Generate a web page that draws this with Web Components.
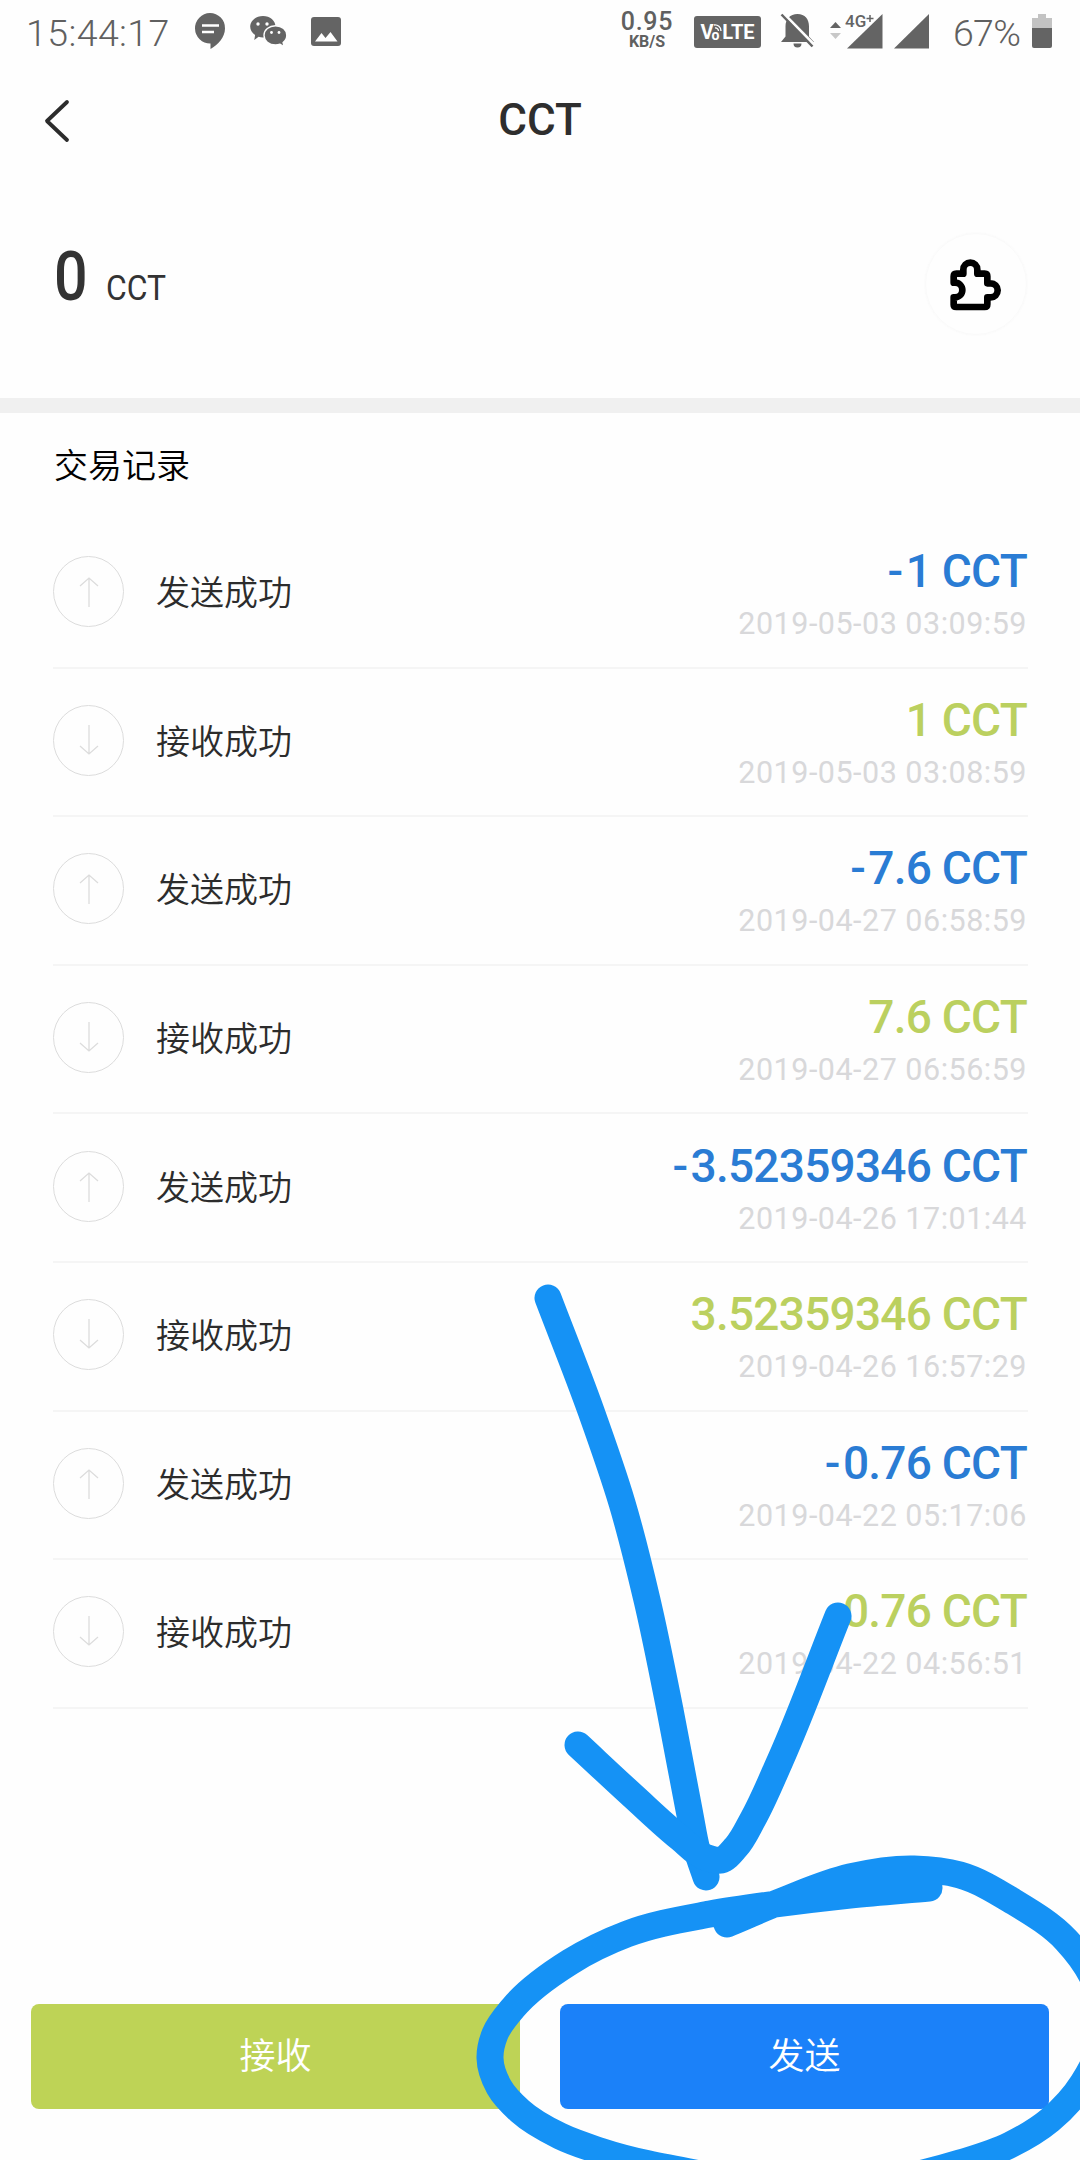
<!DOCTYPE html>
<html lang="zh-CN">
<head>
<meta charset="utf-8">
<title>CCT</title>
<style>
    html, body {
        margin: 0;
        padding: 0;
        background: #fefefe;
    }
    body {
        width: 1080px;
        height: 2160px;
        overflow: hidden;
        font-family: Roboto, "Noto Sans CJK SC", sans-serif;
    }
</style>
</head>
<body>
<wallet-page></wallet-page>

<script>
(function(){
    function attach(el, html) {
        const template = document.createElement('template');
        template.innerHTML = html;
        const root = el.attachShadow({mode: 'open'});
        root.appendChild(template.content.cloneNode(true));
        return root;
    }

    class StatusBar extends HTMLElement {
        constructor() {
            super();
            attach(this, `
                <style>
                    :host {
                        display: flex;
                        align-items: flex-start;
                        box-sizing: border-box;
                        height: 64px;
                        padding: 0 28px 0 26px;
                        color: #606060;
                        fill: #646464;
                        white-space: nowrap;
                    }
                    svg { display: block; flex: none; overflow: visible; }
                    .time, .percent {
                        font-size: 37.5px;
                        font-weight: 350;
                        line-height: 44px;
                        margin-top: 11px;
                    }
                    .time { width: 167px; letter-spacing: 0.4px; }
                    .percent { width: 79px; margin-left: 23px; letter-spacing: -0.7px; }
                    .chat { margin: 13px 25px 0 2px; }
                    .wechat { margin: 16px 24px 0 0; }
                    .image { margin-top: 17px; }
                    .speed {
                        width: 56px;
                        margin: 8px 19px 0 auto;
                        text-align: center;
                        font-weight: 500;
                    }
                    .speed b { display: block; font-weight: 500; font-size: 25px; line-height: 27px; letter-spacing: 0.7px; }
                    .speed i { display: block; font-style: normal; font-weight: 700; font-size: 16px; line-height: 14px; }
                    .volte {
                        display: flex;
                        align-items: center;
                        justify-content: center;
                        width: 67px;
                        height: 32px;
                        margin: 16px 19px 0 0;
                        border-radius: 3px;
                        background: #646464;
                        color: #fff;
                        font-weight: 700;
                        font-size: 20px;
                    }
                    .volte small { font-size: 14px; margin: 5px 1px 0 -2px; }
                    .volte svg { margin: -9px 0 0 -6px; }
                    .bell { margin: 13px 15px 0 0; }
                    .net { margin: 14px 11px 0 0; }
                    .net text { font-size: 17px; font-weight: 500; }
                    .signal { margin-top: 14px; }
                    .battery { margin-top: 14px; }
                </style>
                <span class="time">15:44:17</span>
                <svg class="chat" width="30" height="36" viewBox="0 0 30 36">
                    <path d="M15 0a15 15 0 0 1 15 15.500C30 24 23 32 15.500 36V30.500A15 15 0 0 1 15 0z"/>
                    <path d="M7 12.500H24M7 19H19" stroke="#fff" stroke-width="2.500"/>
                </svg>
                <svg class="wechat" width="37" height="32" viewBox="0 0 37 32">
                    <path d="M13 0C20 0 25.500 4.500 25.500 11S20 21.500 13 21.500c-1.600 0-3-.2-4.400-.7L4.300 24l.8-5C2 17 .2 14 .2 10.800.2 4.500 6 0 13 0z"/>
                    <path d="M25.500 9.800c6.600 0 11.300 4.200 11.300 9.500 0 3-1.500 5.500-3.700 7.300l1 4.200-4-2.600c-1.300.5-2.900.8-4.600.8-6.500 0-11.500-4.300-11.500-9.700s5-9.500 11.500-9.500z" stroke="#fefefe" stroke-width="1.400"/>
                    <g fill="#fff"><circle cx="8" cy="8" r="1.700"/><circle cx="17" cy="8" r="1.700"/><circle cx="21.500" cy="16.500" r="1.400"/><circle cx="29" cy="16.500" r="1.400"/></g>
                </svg>
                <svg class="image" width="30" height="29" viewBox="0 0 30 29">
                    <rect width="30" height="29" rx="3"/>
                    <path d="M4 24.500 10.500 16l4 5L19.500 15l7 9.500z" fill="#fff"/>
                </svg>
                <div class="speed"><b>0.95</b><i>KB/S</i></div>
                <div class="volte">V<small>o</small><svg width="8" height="8" viewBox="0 0 8 8" fill="none" stroke="#fff" stroke-width="1.300"><path d="M0 1a6 6 0 0 1 7 6M1 4a3 3 0 0 1 3.500 3"/></svg>LTE</div>
                <svg class="bell" width="35" height="35" viewBox="0 0 35 35">
                    <path d="M17.500 1C25 1 29 6 29 13.500V23.500L34 29H1L5.500 23.500V13.500C5.500 6 10 1 17.500 1zM13.500 30.500h8a4 4 0 0 1-8 0z"/>
                    <path d="M3 0 34 31.500" stroke="#fefefe" stroke-width="3"/>
                    <path d="M1.500 1.500 32.500 33.500" stroke="#646464" stroke-width="2.500"/>
                </svg>
                <svg class="net" width="53" height="35" viewBox="0 0 53 35">
                    <path d="M0 14 5.500 8l5.500 6z"/>
                    <path d="M0 19h11l-5.500 6z" fill="#c8c8c8"/>
                    <path d="M17 34.500 52.500 0V34.500z"/>
                    <text x="15" y="13">4G</text>
                    <path d="M40 1v7M36.500 4.500h7" stroke="#646464" stroke-width="1.500"/>
                </svg>
                <svg class="signal" width="36" height="35" viewBox="0 0 36 35"><path d="M0 34.500 35 0V34.500z"/></svg>
                <span class="percent">67%</span>
                <svg class="battery" width="20" height="34" viewBox="0 0 20 34">
                    <path d="M6 0h8v4h6v11H0V4h6z" fill="#c3c3c3"/>
                    <path d="M0 14h20v18a2 2 0 0 1-2 2H2a2 2 0 0 1-2-2z"/>
                </svg>
            `);
        }
    }

    class NavBar extends HTMLElement {
        constructor() {
            super();
            attach(this, `
                <style>
                    :host {
                        display: grid;
                        grid-template-columns: 100px 1fr 100px;
                        align-items: center;
                        height: 112px;
                        color: #2e2e2e;
                        font-size: 44px;
                        font-weight: 500;
                        text-align: center;
                    }
                    svg { display: block; margin: 2px 0 0 44px; }
                </style>
                <svg width="26" height="44" viewBox="0 0 26 44" fill="none" stroke="#2c2c2c" stroke-width="3.800" stroke-linecap="round" stroke-linejoin="round"><path d="M23 3 3 22 23 41"/></svg>
                <slot></slot>
            `);
        }
    }

    class BalanceCard extends HTMLElement {
        constructor() {
            super();
            const root = attach(this, `
                <style>
                    :host {
                        display: flex;
                        align-items: flex-start;
                        justify-content: space-between;
                        box-sizing: border-box;
                        height: 237px;
                        padding: 57px 53px 0 54px;
                        border-bottom: 15px solid #f0f0f0;
                        color: #333;
                    }
                    .balance { display: flex; align-items: baseline; line-height: 80px; padding-top: 4px; }
                    .value {
                        width: 52px;
                        font-size: 68px;
                        font-weight: 500;
                        transform: scaleX(.87);
                        transform-origin: 0 0;
                    }
                    .unit {
                        font-size: 35px;
                        transform: scaleX(.91);
                        transform-origin: 0 0;
                    }
                    .badge {
                        display: flex;
                        align-items: center;
                        justify-content: center;
                        box-sizing: border-box;
                        width: 102px;
                        height: 102px;
                        border: 1px solid #fafafa;
                        border-radius: 50%;
                        box-shadow: 0 0 3px #f9f9f9;
                    }
                    .badge svg { margin: 1px 0 0 -1px; }
                </style>
                <div class="balance"><span class="value"></span><span class="unit"></span></div>
                <div class="badge">
                    <svg width="51" height="52" viewBox="211 116 153 156" fill="#fefefe" stroke="#000" stroke-width="20" stroke-linejoin="round">
                        <path d="M222 253Q222 260 230 260H315Q323 260 323 252V231H333A21 21 0 0 0 333 189H323V168Q323 160 315 160H293V148A21 21 0 0 0 251 148V160H230Q222 160 222 168V187H226A22 22 0 0 1 226 231H222Z"/>
                    </svg>
                </div>
            `);
            root.querySelector('.value').textContent = this.getAttribute('value');
            root.querySelector('.unit').textContent = this.getAttribute('unit');
        }
    }

    class TxRow extends HTMLElement {
        constructor() {
            super();
            const sent = this.getAttribute('kind') === 'send';
            const root = attach(this, `
                <style>
                    :host {
                        display: flex;
                        align-items: center;
                        box-sizing: border-box;
                        height: 148.6px;
                        margin: 0 52px 0 53px;
                        border-bottom: 2px solid #f5f5f5;
                    }
                    svg { flex: none; margin-top: -3px; }
                    .label { margin: -5px auto 0 32px; font-size: 34px; font-weight: 350; color: #2c2c2c; }
                    .info { text-align: right; padding-right: 1px; white-space: nowrap; }
                    .amount {
                        font-size: 46px;
                        line-height: 54px;
                        font-weight: 500;
                        letter-spacing: -0.75px;
                        color: ${sent ? '#2a7cd4' : '#bbd05f'};
                    }
                    .amount::first-letter { letter-spacing: ${sent ? '2.5px' : '-0.75px'}; }
                    .date {
                        font-size: 30.5px;
                        line-height: 36px;
                        margin-top: 8px;
                        letter-spacing: 0.5px;
                        color: #d8d8da;
                    }
                </style>
                <svg width="71" height="71" viewBox="0 0 71 71" fill="none" stroke="#dcdcdc">
                    <circle cx="35.500" cy="35.500" r="35"/>
                    <path stroke-width="1.300" d="${sent ? 'M36 51V22M27 30 36 22 45 30' : 'M36 20V49M27 41 36 49 45 41'}"/>
                </svg>
                <span class="label">${sent ? '发送成功' : '接收成功'}</span>
                <div class="info"><div class="amount"></div><div class="date"></div></div>
            `);
            root.querySelector('.amount').textContent = this.getAttribute('amount') + ' CCT';
            root.querySelector('.date').textContent = this.getAttribute('date');
        }
    }

    class ActionButton extends HTMLElement {
        constructor() {
            super();
            attach(this, `
                <style>
                    :host {
                        display: flex;
                        align-items: center;
                        justify-content: center;
                        flex: 1;
                        height: 105px;
                        border-radius: 8px;
                        background: var(--fill);
                        color: #fff;
                        font-size: 36px;
                        font-weight: 350;
                    }
                    span { margin-top: -8px; }
                </style>
                <span><slot></slot></span>
            `);
        }
    }

    // freehand marker strokes, each a list of points the line runs through
    const strokes = [
        [[548,1298], [591,1411], [622,1503], [647,1600], [670,1710], [690,1815], [697,1850], [706,1877]],
        [[578,1745], [633,1796], [680,1838], [705,1857], [721,1860], [736,1847], [753,1819], [780,1761], [838,1616]],
        [[727,1924], [782,1901], [850,1877], [914,1869], [960,1875],
            [1014,1902], [1066,1940], [1096,1985], [1103,2035], [1083,2083], [1050,2120], [1010,2145], [960,2163], [905,2177], [800,2188],
            [700,2174], [600,2151], [560,2136], [520,2111], [499,2087], [490,2058], [495,2034], [513,2008], [570,1962], [627,1934],
            [710,1914], [776,1904], [850,1895], [929,1888]]
    ];

    class MarkerLayer extends HTMLElement {
        constructor() {
            super();
            const root = attach(this, `
                <style>
                    :host {
                        display: block;
                        position: absolute;
                        left: 0;
                        top: 0;
                        pointer-events: none;
                    }
                    svg { display: block; }
                </style>
                <svg width="1080" height="2160" viewBox="0 0 1080 2160" fill="none" stroke="#1592f5" stroke-width="27" stroke-linecap="round" stroke-linejoin="round"></svg>
            `);
            root.querySelector('svg').innerHTML = strokes.map(p => `<path d="${this.smooth(p)}"/>`).join('');
        }

        // unit tangent-ish vector at point i, the nearer neighbour counts for more
        tangent(p, i) {
            const slope = (a, b) => {
                const len = Math.hypot(b[0] - a[0], b[1] - a[1]);
                return [(b[0] - a[0]) / len, (b[1] - a[1]) / len, len];
            };
            if (i === 0) return slope(p[0], p[1]);
            if (i === p.length - 1) return slope(p[i - 1], p[i]);
            const s = slope(p[i - 1], p[i]);
            const t = slope(p[i], p[i + 1]);
            const sum = s[2] + t[2];
            return [0, 1].map(n => (s[n] * t[2] + t[n] * s[2]) / sum);
        }

        smooth(p) {
            let d = `M${p[0]}`;
            for (let i = 0; i < p.length - 1; i++) {
                const b = p[i], c = p[i + 1];
                const k = Math.hypot(c[0] - b[0], c[1] - b[1]) / 3;
                const s = this.tangent(p, i), t = this.tangent(p, i + 1);
                d += `C${b[0] + s[0] * k},${b[1] + s[1] * k} ${c[0] - t[0] * k},${c[1] - t[1] * k} ${c}`;
            }
            return d;
        }
    }

    class WalletPage extends HTMLElement {
        constructor() {
            super();
            attach(this, `
                <style>
                    :host {
                        display: flex;
                        flex-direction: column;
                        position: relative;
                        width: 1080px;
                        height: 2160px;
                        overflow: hidden;
                        background: #fefefe;
                    }
                    h2 {
                        margin: 0;
                        padding: 0 54px;
                        height: 107px;
                        line-height: 106px;
                        font-size: 34px;
                        font-weight: 350;
                        color: #000;
                    }
                    footer {
                        display: flex;
                        gap: 40px;
                        margin-top: auto;
                        padding: 0 31px 51px;
                    }
                </style>
                <status-bar></status-bar>
                <nav-bar>CCT</nav-bar>
                <balance-card value="0" unit="CCT"></balance-card>
                <h2>交易记录</h2>
                <main>
                    <tx-row kind="send" amount="-1" date="2019-05-03 03:09:59"></tx-row>
                    <tx-row kind="receive" amount="1" date="2019-05-03 03:08:59"></tx-row>
                    <tx-row kind="send" amount="-7.6" date="2019-04-27 06:58:59"></tx-row>
                    <tx-row kind="receive" amount="7.6" date="2019-04-27 06:56:59"></tx-row>
                    <tx-row kind="send" amount="-3.52359346" date="2019-04-26 17:01:44"></tx-row>
                    <tx-row kind="receive" amount="3.52359346" date="2019-04-26 16:57:29"></tx-row>
                    <tx-row kind="send" amount="-0.76" date="2019-04-22 05:17:06"></tx-row>
                    <tx-row kind="receive" amount="0.76" date="2019-04-22 04:56:51"></tx-row>
                </main>
                <footer>
                    <action-button style="--fill: #bed356">接收</action-button>
                    <action-button style="--fill: #1b81f9">发送</action-button>
                </footer>
                <marker-layer></marker-layer>
            `);
        }
    }

    customElements.define('status-bar', StatusBar);
    customElements.define('nav-bar', NavBar);
    customElements.define('balance-card', BalanceCard);
    customElements.define('tx-row', TxRow);
    customElements.define('action-button', ActionButton);
    customElements.define('marker-layer', MarkerLayer);
    customElements.define('wallet-page', WalletPage);
})();
</script>
</body>
</html>
